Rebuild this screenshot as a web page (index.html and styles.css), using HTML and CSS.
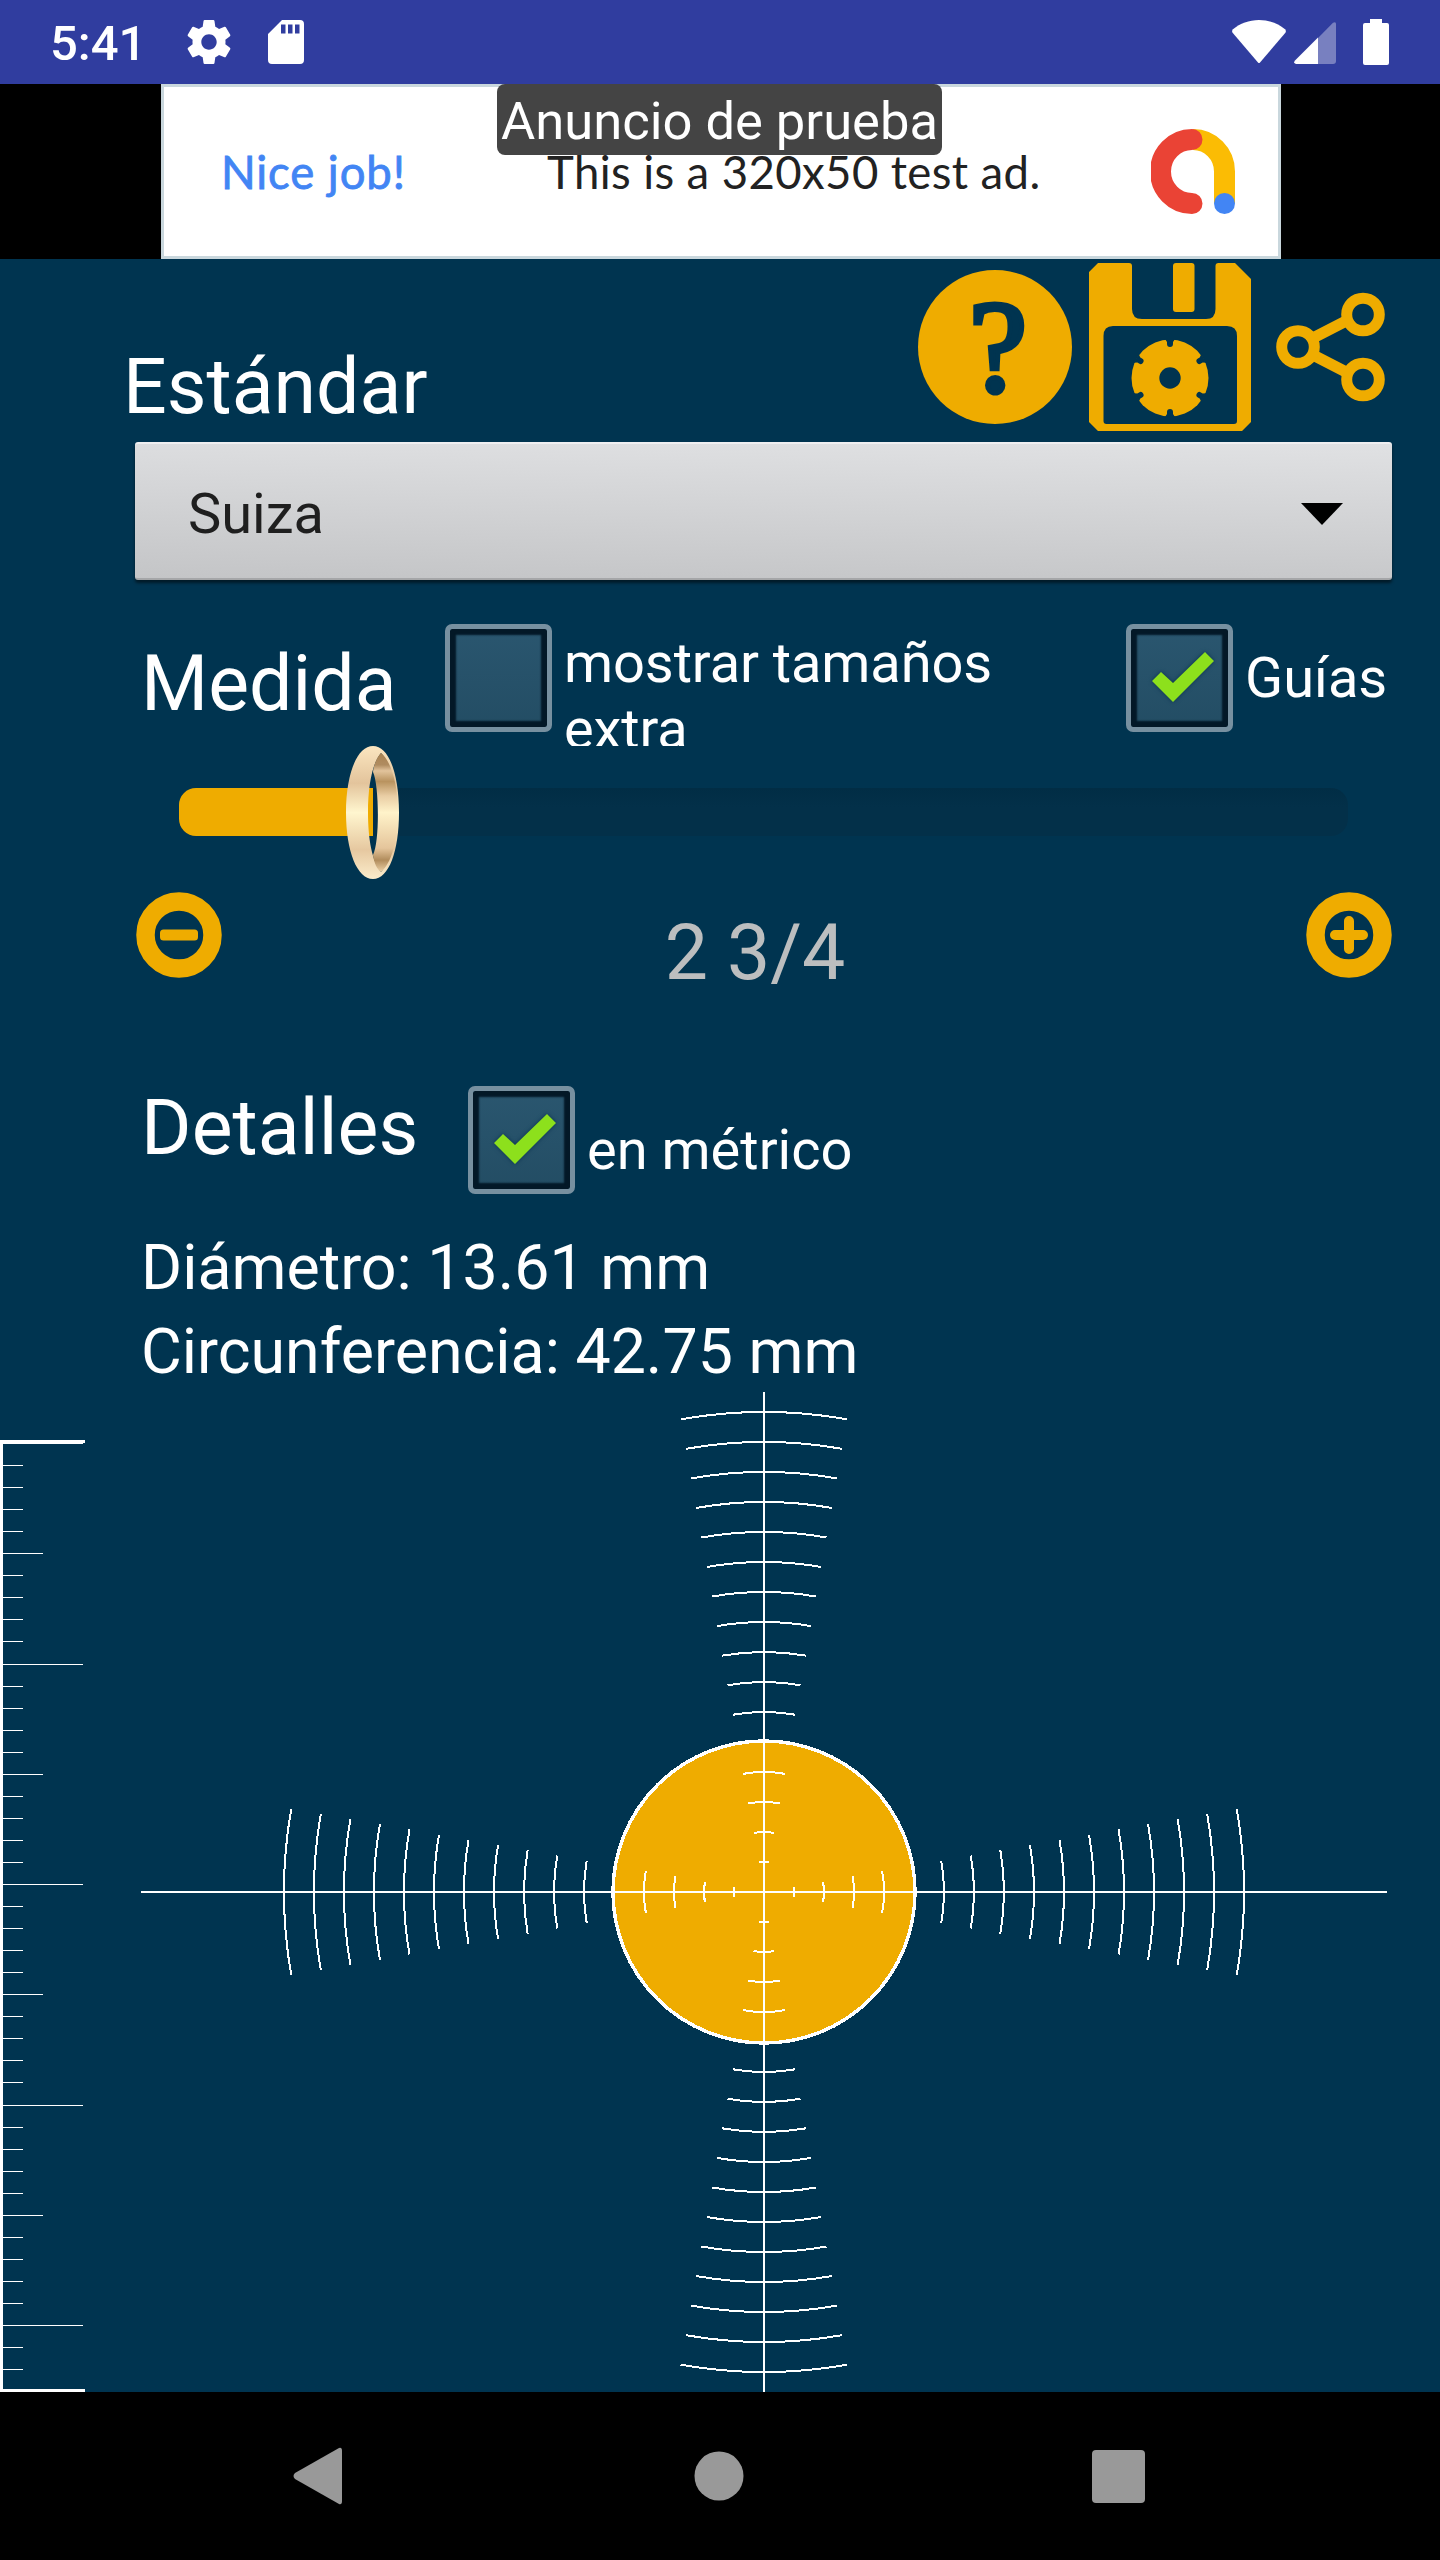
FILE: index.html
```
<!DOCTYPE html>
<html lang="es">
<head>
<meta charset="utf-8">
<title>Medidor de anillos</title>
<link rel="stylesheet" href="styles.css">
</head>
<body>

<div class="statusbar">
  <span class="clock">5:41</span>
  <svg class="st-gear" width="44" height="44" viewBox="2 2 20 20"><path fill="#fff" d="M19.43 12.98c.04-.32.07-.64.07-.98s-.03-.66-.07-.98l2.11-1.65c.19-.15.24-.42.12-.64l-2-3.46c-.12-.22-.39-.3-.61-.22l-2.49 1c-.52-.4-1.08-.73-1.69-.98l-.38-2.65C14.46 2.18 14.25 2 14 2h-4c-.25 0-.46.18-.49.42l-.38 2.65c-.61.25-1.17.59-1.69.98l-2.49-1c-.23-.09-.49 0-.61.22l-2 3.46c-.13.22-.07.49.12.64l2.11 1.65c-.04.32-.07.65-.07.98s.03.66.07.98l-2.11 1.65c-.19.15-.24.42-.12.64l2 3.46c.12.22.39.3.61.22l2.49-1c.52.4 1.08.73 1.69.98l.38 2.65c.03.24.24.42.49.42h4c.25 0 .46-.18.49-.42l.38-2.65c.61-.25 1.17-.59 1.69-.98l2.49 1c.23.09.49 0 .61-.22l2-3.46c.12-.22.07-.49-.12-.64l-2.11-1.65zM12 15.500c-1.930 0-3.500-1.570-3.500-3.500s1.570-3.500 3.500-3.500 3.500 1.570 3.500 3.500-1.570 3.500-3.500 3.500z"/></svg>
  <svg class="st-sd" width="36" height="44" viewBox="0 0 36 44"><path fill="#fff" fill-rule="evenodd" d="M14 0h18a4 4 0 0 1 4 4v36a4 4 0 0 1-4 4H4a4 4 0 0 1-4-4V14zM13 4.500v9h4.500v-9zM20 4.500v9h4.500v-9zM27 4.500v9h4.500v-9z"/></svg>
  <div class="st-right">
    <svg width="54" height="44" viewBox="0 0 54 44"><path fill="#fff" d="M27 0C17 0 8 3.500 1 9.200a3 3 0 0 0-.4 3.600L26 42.500q1 1 2 0L53.400 12.800a3 3 0 0 0-.4-3.600C46 3.500 37 0 27 0z"/></svg>
    <svg class="st-signal" width="42" height="42" viewBox="0 0 42 42"><path fill="#fff" fill-opacity=".35" d="M24 16 39 .8Q42-1 42 2v37a3 3 0 0 1-3 3H24z"/><path fill="#fff" d="M24 15.500V42H2Q-1 41 1 38.500z"/></svg>
    <svg class="st-battery" width="26" height="46" viewBox="0 0 26 46"><path fill="#fff" d="M7 0h12v4h5a2 2 0 0 1 2 2v38a2 2 0 0 1-2 2H2a2 2 0 0 1-2-2V6a2 2 0 0 1 2-2h5z"/></svg>
  </div>
</div>

<div class="adbar">
  <div class="ad">
    <span class="ad-title">Nice job!</span>
    <span class="ad-text">This is a 320x50 test ad.</span>
    <svg class="ad-logo" width="84" height="85" viewBox="0 0 84 85">
      <path d="M42 10.500A31.500 32 0 0 1 73.500 42.500V74" fill="none" stroke="#fbbc04" stroke-width="21"/>
      <path d="M41 10.500A31.500 32 0 0 0 41 74.500" fill="none" stroke="#ea4335" stroke-width="21" stroke-linecap="round"/>
      <circle cx="73.500" cy="74.500" r="10.500" fill="#4285f4"/>
    </svg>
    <span class="ad-label">Anuncio de prueba</span>
  </div>
</div>

<div class="app">

  <div class="header">
    <h1 class="title">Estándar</h1>
    <div class="actions">
      <svg class="ic-help" width="154" height="154" viewBox="0 0 154 154">
        <circle cx="77" cy="77" r="77" fill="#efac00"/>
        <text class="help-mark" x="80" y="121" text-anchor="middle">?</text>
      </svg>
      <svg class="ic-save" width="162" height="168" viewBox="0 0 162 168">
        <path fill="#efac00" fill-rule="evenodd" d="M9 0H40Q43 0 43 3V46Q43 56 53 56H117Q126.500 56 126.500 46V3Q126.500 0 129.500 0H146L162 16V159L153 168H9L0 159V9ZM24 63Q14.500 63 14.500 73V158Q14.500 161 17.500 161H145Q148 161 148 158V73Q148 63 138 63Z"/>
        <rect x="84" y="0" width="21.500" height="49" rx="3" fill="#efac00"/>
        <circle cx="81" cy="115" r="38.500" fill="#efac00"/>
        <circle cx="81" cy="115" r="10.700" class="cut"/>
        <g class="cut">
          <path id="notch" d="M76 76H86L84 79V81A3 3 0 0 1 78 81V79Z"/>
          <use href="#notch" transform="rotate(60 81 115)"/>
          <use href="#notch" transform="rotate(120 81 115)"/>
          <use href="#notch" transform="rotate(180 81 115)"/>
          <use href="#notch" transform="rotate(240 81 115)"/>
          <use href="#notch" transform="rotate(300 81 115)"/>
        </g>
      </svg>
      <svg class="ic-share" width="110" height="110" viewBox="0 0 110 110" fill="none" stroke="#efac00">
        <path d="M37 46 72 28M37 63 72 81" stroke-width="11"/>
        <circle cx="22" cy="55" r="16.300" stroke-width="11"/>
        <circle cx="87" cy="22.500" r="16.300" stroke-width="11"/>
        <circle cx="87" cy="87.500" r="16.300" stroke-width="11"/>
      </svg>
    </div>
  </div>

  <div class="spinner">
    <span>Suiza</span>
    <svg width="42" height="22" viewBox="0 0 42 22"><path d="M0 0H42L21 22z"/></svg>
  </div>

  <div class="row size-row">
    <h2 class="title">Medida</h2>
    <span class="check check-extra"></span>
    <span class="check-text extra-text">mostrar tamaños extra</span>
    <span class="check check-guides"><svg width="64" height="52" viewBox="0 0 64 52"><path d="M1 29 10 20 22 31 54 0 63 9 22 50z"/></svg></span>
    <span class="check-text guides-text">Guías</span>
  </div>

  <div class="slider">
    <div class="track"><div class="progress"></div></div>
    <svg class="thumb" width="54" height="133" viewBox="0 0 54 133">
      <defs>
        <linearGradient id="gold" x1="0" y1="0" x2="0" y2="1">
          <stop offset="0" stop-color="#fbe6c0"/>
          <stop offset=".28" stop-color="#e3c49c"/>
          <stop offset=".5" stop-color="#fff6cf"/>
          <stop offset=".78" stop-color="#e6c8a0"/>
          <stop offset="1" stop-color="#fbeccb"/>
        </linearGradient>
        <linearGradient id="inner" x1="0" y1="0" x2="0" y2="1">
          <stop offset="0" stop-color="#a88352"/>
          <stop offset=".1" stop-color="#b08c60"/>
          <stop offset=".15" stop-color="#e2c49c"/>
          <stop offset=".24" stop-color="#b9935f"/>
          <stop offset=".36" stop-color="#e9cda4"/>
          <stop offset=".5" stop-color="#fff3ca"/>
          <stop offset=".8" stop-color="#e5c59b"/>
          <stop offset=".9" stop-color="#b18c5c"/>
          <stop offset="1" stop-color="#edd2a8"/>
        </linearGradient>
      </defs>
      <path fill="url(#gold)" fill-rule="evenodd" d="M27 0C43 0 53 28 53 66.500S43 133 27 133S0 105 0 66.500S11 0 27 0ZM35 7C26 18 22 40 22 66.500S26 115 35 126C43 118 48 95 48 66.500S43 15 35 7Z"/>
      <path fill="url(#inner)" d="M35 7C31 11 28 18 27 26C33 38 34 95 27 109C28 117 31 123 35 126C45 118 52 95 52 66.500S45 15 35 7Z"/>
    </svg>
  </div>

  <div class="steps">
    <svg width="86" height="86" viewBox="0 0 86 86">
      <circle cx="43" cy="43" r="33.500" fill="none" stroke="#efac00" stroke-width="18.500"/>
      <rect x="24" y="37.500" width="38" height="11" rx="3.500" fill="#efac00"/>
    </svg>
    <span class="value">2 3/4</span>
    <svg width="86" height="86" viewBox="0 0 86 86">
      <circle cx="43" cy="43" r="33.500" fill="none" stroke="#efac00" stroke-width="18.500"/>
      <path d="M29 43H57M43 29V57" stroke="#efac00" stroke-width="10" stroke-linecap="round"/>
    </svg>
  </div>

  <div class="row details-row">
    <h2 class="title">Detalles</h2>
    <span class="check check-metric"><svg width="64" height="52" viewBox="0 0 64 52"><path d="M1 29 10 20 22 31 54 0 63 9 22 50z"/></svg></span>
    <span class="check-text metric-text">en métrico</span>
  </div>

  <div class="readings">
    <p>Diámetro: 13.61 mm</p>
    <p>Circunferencia: 42.75 mm</p>
  </div>

  <svg class="stage" width="1440" height="1000" viewBox="0 0 1440 1000" shape-rendering="crispEdges">
    <!-- regla en mm -->
    <g id="ruler" fill="#fff">
      <rect x="0" y="48" width="3" height="952"/>
      <rect x="0" y="48" width="85" height="3"/>
      <rect x="0" y="50" width="83" height="2"/>
      <rect x="0" y="997" width="85" height="3"/>
    </g>
    <!-- anillo y guías -->
    <circle cx="764" cy="500" r="151" fill="#efac00" stroke="#fff" stroke-width="3.500"/>
    <path d="M141 500H1387M764 0V1000" stroke="#fff" stroke-width="2"/>
    <g id="guides" fill="none" stroke="#fff" stroke-width="2"></g>
  </svg>
</div>

<div class="navbar">
  <svg width="50" height="58" viewBox="0 0 50 58"><path fill="#999" d="M46 1Q49 0 49 4V54Q49 58 46 57L2 32Q-1 29 2 26z"/></svg>
  <svg class="nav-home" width="50" height="50" viewBox="0 0 50 50"><circle cx="25" cy="25" r="24.500" fill="#999"/></svg>
  <svg width="53" height="53" viewBox="0 0 53 53"><rect width="53" height="53" rx="4" fill="#999"/></svg>
</div>

<script src="script.js"></script>
</body>
</html>
```

FILE: styles.css
```
*{margin:0; padding:0; box-sizing:border-box;}
body{width:1440px; background:#000; color:#fff; font-family:Roboto, "Liberation Sans", sans-serif;}
svg{display:block; flex:none;}
span, h1, h2, p{white-space:nowrap;}

/* barra de estado */
.statusbar{display:flex; height:84px; padding-left:50px; background:#303d9f;}
.clock{width:137px; padding-top:15px; font-size:49px; line-height:58px; font-weight:500;}
.st-gear{margin-top:20px;}
.st-sd{margin:20px 0 0 37px;}
.st-right{display:flex; margin:20px 51px 0 auto;}
.st-signal{margin:2px 27px 0 8px;}
.st-battery{margin-top:-1px;}

/* anuncio */
.adbar{height:175px; padding:0 159px 0 161px; background:#000;}
.ad{position:relative; display:flex; height:175px; padding-left:57px; border:3px solid #c9d7dd; background:#fff; font-family:Lato, sans-serif;}
.ad-title{width:326px; padding-top:58px; font-size:45.500px; line-height:54px; letter-spacing:.9px; color:#4285f4; -webkit-text-stroke:.8px #4285f4;}
.ad-text{padding-top:58px; font-size:45.500px; line-height:54px; letter-spacing:.4px; color:#222;}
.ad-logo{margin:42px 43px 0 auto;}
.ad-label{position:absolute; left:333px; top:-3px; width:445px; height:71px; border-radius:8px; background:#444; text-align:center; font:52.500px/74px Roboto, sans-serif; color:#fff;}

.app{height:2133px; background:#003450;}
.title{font-size:77px; line-height:90px; font-weight:400;}

.header{display:flex; justify-content:space-between; height:183px; padding:0 54px 0 123px;}
.header .title{margin-top:83px;}
.actions{display:flex;}
.ic-help{margin:11px 17px 0 0;}
.ic-save{margin:4px 25px 0 0;}
.ic-share{margin-top:33px;}
.help-mark{font:131px "Liberation Serif", serif; fill:#003450; stroke:#003450; stroke-width:5px;}
.cut{fill:#003450;}

.spinner{display:flex; align-items:center; justify-content:space-between; height:138px; margin:0 48px 0 135px; padding:6px 49px 0 53px; border-radius:3px; border-top:2px solid #efeff1; border-bottom:2px solid #a5a6a8; background:linear-gradient(178deg, #c4c5c7, #c8c9cb 30%, #e0e1e3); background:linear-gradient(181deg, #e0e1e3, #c4c5c7); box-shadow:0 3px 3px rgba(0,0,0,.5); font-size:56px; line-height:66px; color:#1f1f1f;}

.row{display:flex; padding-left:141px;}
.check{display:flex; flex:none; align-items:center; justify-content:center; width:107px; height:108px; border:5px solid #7790a0; border-radius:7px; background:linear-gradient(#2a566f, #234d64); box-shadow:inset 0 0 2px 6px #031827;}
.check svg{margin-left:6px; fill:#8de01c; filter:drop-shadow(0 0 2px #0a3350);}
.check-text{font-size:56px; line-height:66px;}

/* la segunda línea de la etiqueta queda recortada */
.size-row{height:166px; overflow:hidden;}
.size-row .title{width:304px; margin-top:59px;}
.check-extra, .check-guides{margin-top:44px;}
.extra-text{width:440px; margin:50px 122px 0 12px; letter-spacing:-.1px; white-space:normal;}
.guides-text{margin:65px 0 0 12px;}

.slider{position:relative; height:133px; padding:42px 92px 0 179px;}
.track{height:48px; border-radius:17px; background:linear-gradient(#012d45, #033049 40%); overflow:hidden;}
.progress{width:194px; height:48px; background:#efac00;}
.thumb{position:absolute; left:346px; top:0;}

.steps{display:flex; justify-content:space-between; height:207px; padding:13px 48px 0 136px;}
.value{margin:16px 18px 0 0; font-size:77px; line-height:90px; color:#bcbebf;}

.details-row{height:139px;}
.details-row .title{width:327px; margin-top:-3px; letter-spacing:.1px;}
.metric-text{margin:31px 0 0 12px;}

.readings{height:167px; padding:1px 0 0 141px; font-size:62.700px; line-height:84px;}

/* botones de navegación */
.navbar{display:flex; justify-content:space-between; align-items:center; height:168px; padding:0 295px 0 293px;}
.nav-home{margin-left:3px;}
```

FILE: script.js
```
var NS = "http://www.w3.org/2000/svg";
var ruler = document.getElementById("ruler");
var guides = document.getElementById("guides");

// una marca por milímetro
for (var i = 1; i <= 42; i++) {
  var w = i % 10 == 0 ? 80 : (i % 5 == 0 ? 40 : 20);
  var r = document.createElementNS(NS, "rect");
  r.setAttribute("x", 3);
  r.setAttribute("y", Math.round(51 + i * 22.05));
  r.setAttribute("width", w);
  r.setAttribute("height", 1);
  ruler.appendChild(r);
}

// arcos de 20 grados, uno cada 30px
var s = Math.sin(Math.PI / 18), c = Math.cos(Math.PI / 18);
for (var n = 1; n <= 16; n++) {
  if (n == 5) continue;
  for (var a = 0; a < 360; a += 90) {
    var d = n * 30;
    var p = document.createElementNS(NS, "path");
    p.setAttribute("d", "M" + (-d * s) + " " + (-d * c) + "A" + d + " " + d + " 0 0 1 " + (d * s) + " " + (-d * c));
    p.setAttribute("transform", "translate(764 500) rotate(" + a + ")");
    guides.appendChild(p);
  }
}
```
